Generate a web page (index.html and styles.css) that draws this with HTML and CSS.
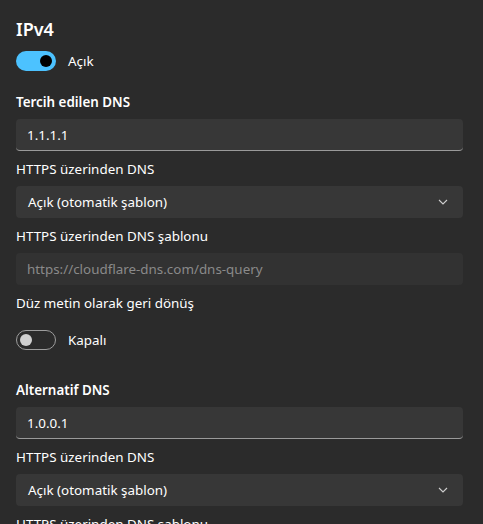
FILE: index.html
```html
<!DOCTYPE html>
<html lang="tr">
<head>
<meta charset="utf-8">
<link rel="stylesheet" href="styles.css">
</head>
<body>
<main class="page">
  <h1 class="title">IPv4</h1>
  <div class="toggle-row toggle-row--first">
    <span class="toggle toggle--on"><span class="knob"></span></span>
    <span class="toggle-label">Açık</span>
  </div>

  <section class="group group--first">
    <div class="label label--strong">Tercih edilen DNS</div>
    <div class="box input"><span class="value">1.1.1.1</span></div>

    <div class="label">HTTPS üzerinden DNS</div>
    <div class="box select">
      <span class="value">Açık (otomatik şablon)</span>
      <svg class="chevron" width="10" height="6" viewBox="0 0 10 6"><path d="M1 1 L5 5 L9 1" fill="none" stroke="#cfcfcf" stroke-width="1.1"/></svg>
    </div>

    <div class="label">HTTPS üzerinden DNS şablonu</div>
    <div class="box plain"><span class="placeholder">https://cloudflare-dns.com/dns-query</span></div>

    <div class="label">Düz metin olarak geri dönüş</div>
    <div class="toggle-row toggle-row--field">
      <span class="toggle toggle--off"><span class="knob"></span></span>
      <span class="toggle-label">Kapalı</span>
    </div>
  </section>

  <section class="group group--second">
    <div class="label label--strong">Alternatif DNS</div>
    <div class="box input"><span class="value">1.0.0.1</span></div>

    <div class="label">HTTPS üzerinden DNS</div>
    <div class="box select">
      <span class="value">Açık (otomatik şablon)</span>
      <svg class="chevron" width="10" height="6" viewBox="0 0 10 6"><path d="M1 1 L5 5 L9 1" fill="none" stroke="#cfcfcf" stroke-width="1.1"/></svg>
    </div>

    <div class="label">HTTPS üzerinden DNS şablonu</div>
  </section>
</main>
</body>
</html>
```

FILE: styles.css
```css
html, body {
  margin: 0;
  padding: 0;
  background: #2b2b2b;
  height: 100%;
  overflow: hidden;
}

body {
  font-family: "Noto Sans", "Open Sans", sans-serif;
  color: #ffffff;
  font-size: 13.4px;
}

.page {
  padding: 16px 20px 0 16px;
  display: flex;
  flex-direction: column;
}

.title {
  margin: 0;
  height: 26px;
  line-height: 26px;
  font-size: 18px;
  font-weight: 600;
}

.toggle-row {
  display: flex;
  align-items: center;
  gap: 12px;
  height: 20px;
}

.toggle-row--first {
  margin-top: 9px;
}

.toggle-row--field {
  margin-top: 17px;
}

.toggle {
  width: 40px;
  height: 20px;
  box-sizing: border-box;
  border-radius: 10px;
  display: flex;
  align-items: center;
  flex: none;
}

.toggle--on {
  background: #4cc2ff;
  justify-content: flex-end;
  padding-right: 4px;
}

.toggle--on .knob {
  width: 12px;
  height: 12px;
  border-radius: 50%;
  background: #000000;
}

.toggle--off {
  border: 1px solid #9d9d9d;
  padding-left: 3px;
}

.toggle--off .knob {
  width: 12px;
  height: 12px;
  border-radius: 50%;
  background: #d0d0d0;
}

.toggle-label {
  font-size: 13.4px;
  line-height: 20px;
}

.group {
  display: flex;
  flex-direction: column;
}

.group--first {
  margin-top: 21px;
}

.group--second {
  margin-top: 30px;
}

.label {
  line-height: 20px;
  height: 20px;
  font-size: 13.4px;
  margin-top: 8px;
}

.label--strong {
  font-weight: 600;
  margin-top: 0;
}

.box {
  height: 32px;
  box-sizing: border-box;
  background: #373737;
  border-radius: 4px;
  display: flex;
  align-items: center;
  padding: 0 11px;
  margin-top: 7px;
}

.input {
  border-bottom: 1px solid #9a9a9a;
  padding-top: 1px;
}

.select {
  justify-content: space-between;
  padding: 0 15px 0 12px;
}

.plain {
  background: #323232;
}

.value {
  font-size: 13.4px;
  color: #ffffff;
}

.placeholder {
  font-size: 13.4px;
  color: #8a8a8a;
}

.chevron {
  display: block;
}
```
